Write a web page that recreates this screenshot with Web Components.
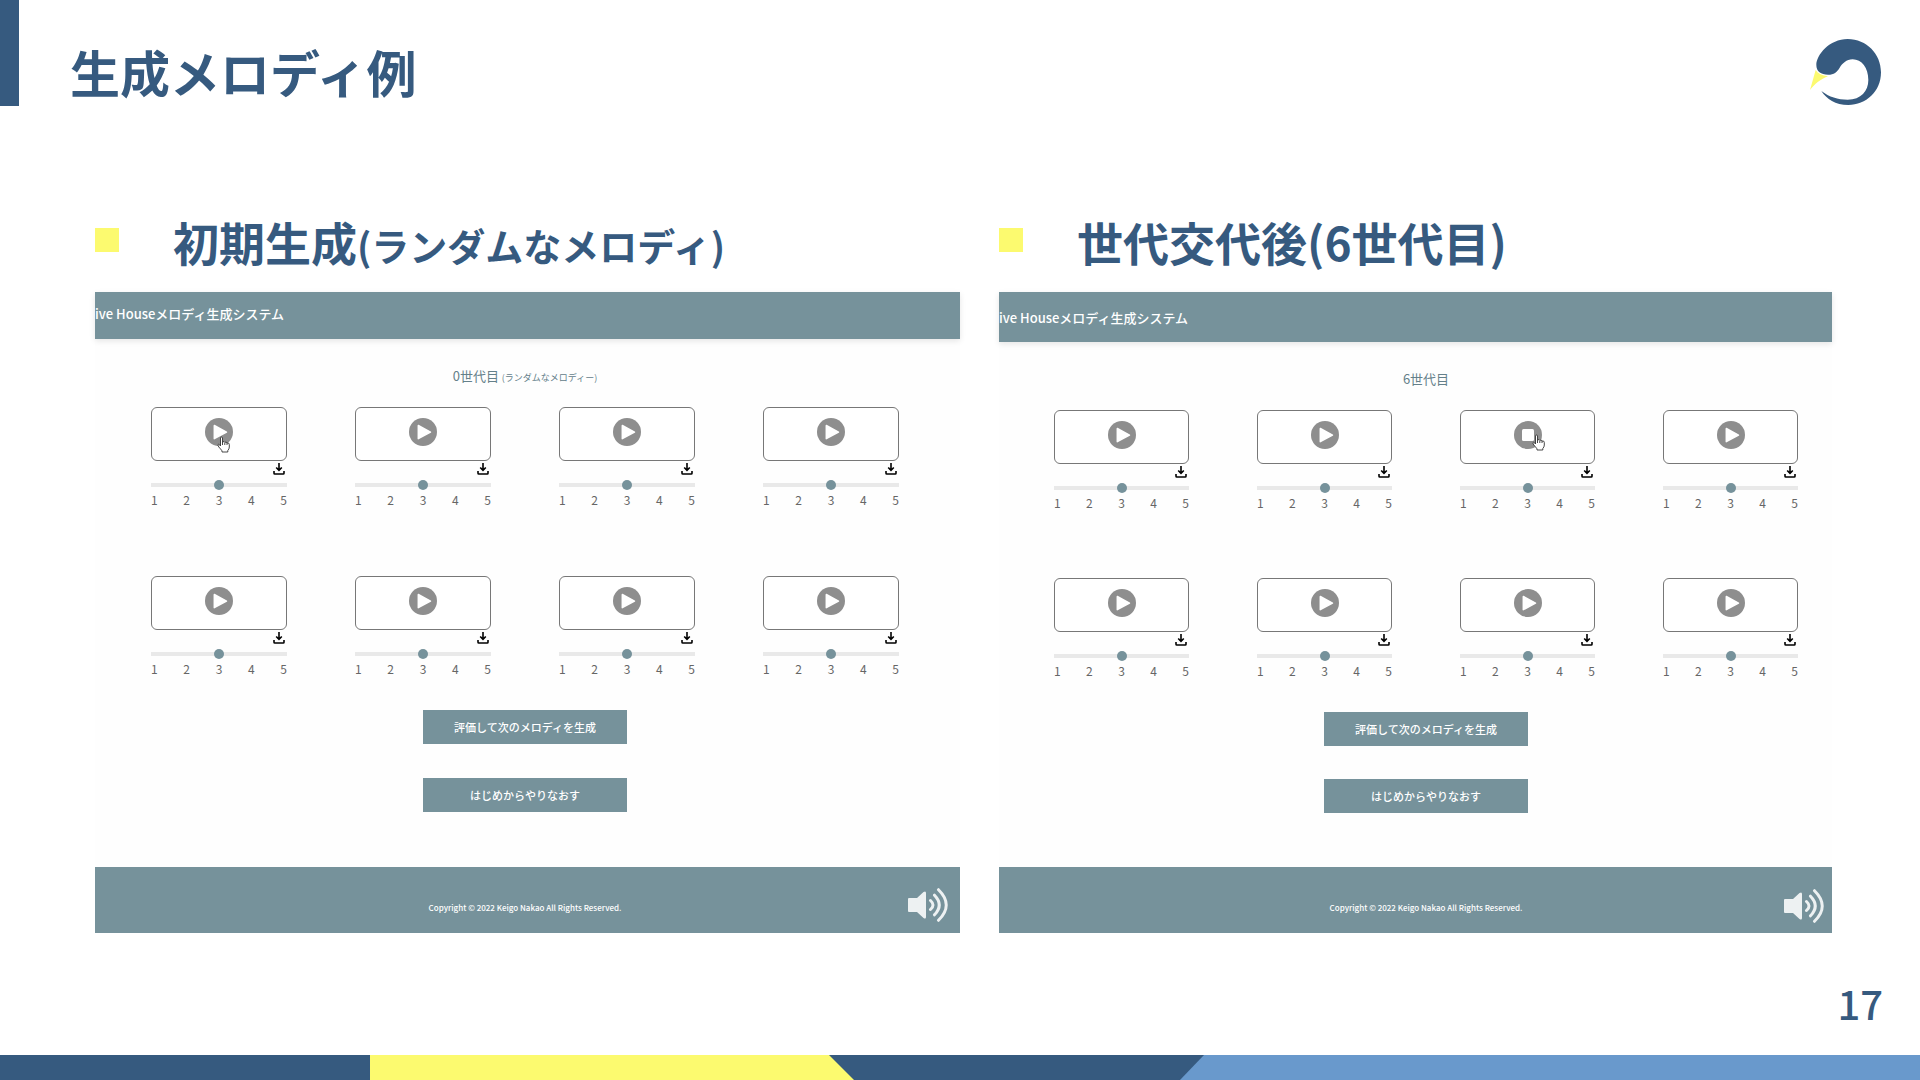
<!DOCTYPE html>
<html lang="ja">
<head>
<meta charset="utf-8">
<title>生成メロディ例</title>
<style>
  body { margin: 0; background: #fff; font-family: "Noto Sans CJK JP", sans-serif; --navy: #365a7f; --yellow: #fcfa6f; --sky: #6999cc; --slate: #76929b; }
</style>
</head>
<body>
<slide-page>
  <slide-title slot="title">生成メロディ例</slide-title>
  <slide-section>
    <span slot="heading">初期生成<small style="font-size:38px">(ランダムなメロディ)</small></span>
    <melody-app generation="0世代目" note="(ランダムなメロディー)" hover="1"
      style="--head:47px;--shift:0 0 5px;--inset:0 61px 0 56px;--row-gap:67px;--btn-gap:34px;--icon-edge:12px;--icon-drop:0"></melody-app>
  </slide-section>
  <slide-section>
    <span slot="heading">世代交代後(6世代目)</span>
    <melody-app generation="6世代目" hover="3" playing="3"
      style="--head:50px;--shift:0;--inset:0 34px 0 55px;--row-gap:66px;--btn-gap:33px;--icon-edge:8px;--icon-drop:1px"></melody-app>
  </slide-section>
  <page-footer slot="footer">17</page-footer>
</slide-page>

<script>
const define = (name, render) => customElements.define(name, class extends HTMLElement {
  connectedCallback() {
    if (this.shadowRoot) return;
    this.attachShadow({ mode: "open" }).innerHTML = render(this);
  }
});

define("slide-page", () => `
  <style>
    :host { display: flex; flex-direction: column; min-height: 100vh; }
    main { flex: 1; display: grid; grid-template-columns: 865fr 833fr; gap: 39px; padding: 105px 88px 0 95px; align-items: start; }
  </style>
  <slot name="title"></slot>
  <main><slot></slot></main>
  <slot name="footer"></slot>`);

define("slide-title", () => `
  <style>
    :host { display: block; }
    header { display: flex; justify-content: space-between; height: 106px; border-left: 19px solid var(--navy); padding-right: 39px; }
    h1 { margin: 0; padding: 36px 0 0 51px; font-size: 50px; line-height: 70px; font-weight: 700; color: var(--navy); }
    svg { width: 71px; height: 66px; margin-top: 39px; }
  </style>
  <header>
    <h1><slot></slot></h1>
    <svg viewBox="92 57 213 198" aria-hidden="true">
      <path fill="#365a7f" d="M111 135C111 105 150 57 205 57C262 57 305 102 305 157C305 215 260 255 207 255C168 255 142 237 126 213C150 231 175 239 205 239C245 239 267 213 267 180C267 143 247 118 220 118C201 118 189 131 181 143C172 157 165 164 146 164C125 164 111 155 111 135Z"/>
      <path fill="#fcfa6f" d="M109 150C116 161 129 167 146 169C121 179 107 192 92 210Z"/>
    </svg>
  </header>`);

define("slide-section", () => `
  <style>
    :host { display: block; min-width: 0; }
    h2 { display: flex; margin: 0 0 21px; font-size: 46px; line-height: 60px; height: 60px; font-weight: 700; color: var(--navy); white-space: nowrap; }
    h2::before { content: ""; width: 24px; height: 24px; margin: 17px 54px 0 0; background: var(--yellow); }
  </style>
  <h2><slot name="heading"></slot></h2>
  <slot></slot>`);

define("melody-app", el => {
  const cards = Array.from({ length: 8 }, (_, i) => `<melody-card ${el.getAttribute("playing") == i + 1 ? "playing" : ""} ${el.getAttribute("hover") == i + 1 ? "hover" : ""}></melody-card>`).join("");
  return `
  <style>
    :host { display: flex; flex-direction: column; min-height: 641px; background: #fefefe; }
    header { box-sizing: border-box; height: var(--head); padding: var(--shift); display: flex; align-items: center; overflow: hidden; background: var(--slate); color: #fff; font-size: 13px; font-weight: 500; box-shadow: 0 2px 6px #0000001a; white-space: nowrap; }
    .body { padding: var(--inset); }
    h3 { margin: 25px 0 19px; font-size: 13px; line-height: 24px; height: 24px; font-weight: 400; text-align: center; color: #64808a; }
    h3 small { font-size: 9px; line-height: 12px; }
    .grid { display: grid; grid-template-columns: repeat(4, minmax(0, 1fr)); column-gap: 68px; row-gap: var(--row-gap); }
    .actions { display: flex; flex-direction: column; align-items: center; gap: var(--btn-gap); margin-top: 32px; }
    .actions button { width: 204px; height: 34px; padding: 0; border: 0; background: var(--slate); color: #fff; font: 500 11px/34px "Noto Sans CJK JP", sans-serif; }
    footer { display: grid; grid-template-columns: 1fr; height: 66px; margin-top: auto; background: var(--slate); color: #fff; }
    .foot, .sound { grid-area: 1 / 1; }
    .foot { padding: var(--inset); }
    p { margin: 32px 0 0; font-size: 8px; line-height: 18px; font-weight: 500; text-align: center; }
    .sound { display: grid; justify-items: end; padding: var(--icon-drop) var(--icon-edge) 0 0; }
    .sound svg { width: 40px; height: 34px; margin-top: 21px; }
  </style>
  <header>ive Houseメロディ生成システム</header>
  <div class="body">
    <h3>${el.getAttribute("generation")}${el.hasAttribute("note") ? ` <small>${el.getAttribute("note")}</small>` : ""}</h3>
    <div class="grid">${cards}</div>
    <div class="actions">
      <button type="button">評価して次のメロディを生成</button>
      <button type="button">はじめからやりなおす</button>
    </div>
  </div>
  <footer>
    <div class="foot"><p>Copyright © 2022 Keigo Nakao All Rights Reserved.</p></div>
    <div class="sound"><svg viewBox="0 0 40 34" aria-hidden="true">
      <path fill="#edf1f2" d="M1 10H9L15.500 4Q18 2.500 18 5V29Q18 31.500 15.500 30L9 24H1Q0 24 0 23V11Q0 10 1 10Z"/>
      <path fill="none" stroke="#edf1f2" stroke-width="3" stroke-linecap="round" d="M22.500 12.500Q27.500 17 22.500 21.500M26.500 7.200Q36 17 26.500 26.800M30.500 1.700Q46 17 30.500 32.300"/>
    </svg></div>
  </footer>`;
});

define("melody-card", el => `
  <style>
    :host { display: block; position: relative; }
    button { display: block; border: 0; padding: 0; background: none; }
    .play { box-sizing: border-box; width: 100%; height: 54px; padding: 10px 0 14px; border: 1px solid #777; border-radius: 6px; background: #fff; }
    .play svg { display: block; width: 28px; height: 28px; margin: auto; }
    .save { margin: 2px 2px 0 auto; height: 16px; width: 12px; }
    .save svg { display: block; width: 12px; height: 12px; margin-bottom: 4px; }
    input { appearance: none; display: block; width: 100%; height: 12px; margin: 0; background: linear-gradient(#e9e9e9, #e9e9e9) center / 100% 4px no-repeat; }
    input::-webkit-slider-thumb { appearance: none; width: 10px; height: 10px; border-radius: 50%; background: var(--slate); }
    label { display: flex; justify-content: space-between; font-size: 12px; line-height: 18px; color: #666; }
    .cursor { position: absolute; width: 13px; height: 17px; left: ${el.hasAttribute("playing") ? "72px; top: 24px" : "66px; top: 29px"}; }
  </style>
  <button class="play" type="button" aria-label="${el.hasAttribute("playing") ? "停止" : "再生"}">
    <svg viewBox="0 0 28 28"><circle cx="14" cy="14" r="14" fill="#8e8e8e"/>${el.hasAttribute("playing")
      ? `<rect x="8" y="8" width="12" height="12" rx="1.500" fill="#fff"/>`
      : `<path fill="#fff" stroke="#fff" stroke-width="1.500" stroke-linejoin="round" d="M9.300 7.500V20.700L21.500 14.100Z"/>`}</svg>
  </button>
  <button class="save" type="button" aria-label="ダウンロード">
    <svg viewBox="0 0 12 12" fill="none" stroke="#000" stroke-width="1.600"><path d="M6 0V7M3.200 4.500L6 7.300L8.800 4.500M1 8V10.200Q1 11 1.800 11H10.200Q11 11 11 10.200V8"/></svg>
  </button>
  <input id="rate" type="range" min="1" max="5" value="3">
  <label for="rate"><span>1</span><span>2</span><span>3</span><span>4</span><span>5</span></label>
  ${el.hasAttribute("hover") ? `<svg class="cursor" viewBox="0 0 13 17"><path fill="#fff" stroke="#333" stroke-width="0.900" stroke-linejoin="round" d="M3.500 10V2Q3.500 1 4.500 1Q5.500 1 5.500 2V6Q7.500 5 7.800 6.300Q9.500 5.500 10 7Q12.300 6.500 12.300 8.500V11Q12.300 13 10.800 14.500V16H5V14.500Q3 13 1.200 10Q0.500 8.500 1.500 8.300Q2.500 8.300 3.500 10ZM5.500 6V9M7.800 6.500V9M10 7V9"/></svg>` : ""}`);

define("page-footer", () => `
  <style>
    :host { display: block; }
    .number { padding-right: 37px; margin-bottom: 22px; text-align: right; font-size: 40px; line-height: 60px; font-weight: 500; color: var(--navy); }
    svg { display: block; width: 100%; height: 25px; }
  </style>
  <div class="number"><slot></slot></div>
  <svg viewBox="0 0 1920 25" preserveAspectRatio="none" aria-hidden="true">
    <path fill="#365a7f" d="M0 0H1920V25H0Z"/>
    <path fill="#fcfa6f" d="M370 0H829L854 25H370Z"/>
    <path fill="#6999cc" d="M1204 0H1920V25H1180Z"/>
  </svg>`);
</script>
</body>
</html>
